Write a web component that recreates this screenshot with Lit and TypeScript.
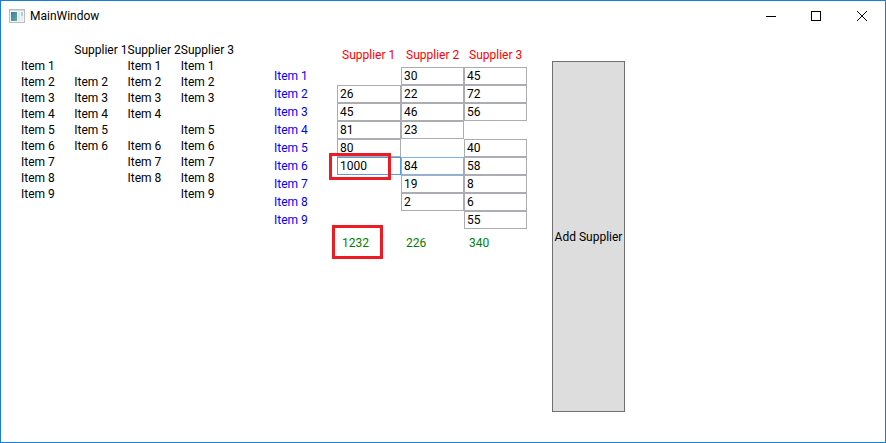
import { LitElement, html, css, svg, nothing } from "lit";
import { customElement } from "lit/decorators.js";
import { classMap } from "lit/directives/class-map.js";

interface Supplier {
  name: string;
  amounts: (number | null)[];
}

const ITEMS = Array.from({ length: 9 }, (_, i) => `Item ${i + 1}`);

const SUPPLIERS: Supplier[] = [
  { name: "Supplier 1", amounts: [null, 26, 45, 81, 80, 1000, null, null, null] },
  { name: "Supplier 2", amounts: [30, 22, 46, 23, null, 84, 19, 2, null] },
  { name: "Supplier 3", amounts: [45, 72, 56, null, 40, 58, 8, 6, 55] },
];

const total = (s: Supplier) => s.amounts.reduce<number>((sum, n) => sum + (n ?? 0), 0);

@customElement("window-bar")
export class WindowBar extends LitElement {
  static styles = css`
    :host {
      display: flex;
      align-items: center;
      height: 29px;
      padding-left: 8px;
    }
    .title {
      flex: 1;
      margin: 0 0 0 5px;
      font-size: 12px;
      line-height: 16px;
      font-weight: 400;
    }
    .app-icon {
      display: block;
    }
    .control {
      width: 46px;
      height: 29px;
      padding: 0;
      border: 0;
      background: none;
      display: flex;
      align-items: center;
      justify-content: center;
    }
  `;

  private control(label: string, shape: unknown) {
    return html`<button class="control" aria-label=${label}>
      <svg width="12" height="12" viewBox="0 0 12 12" fill="none" stroke="#000">${shape}</svg>
    </button>`;
  }

  render() {
    return html`
      <svg class="app-icon" width="16" height="14" viewBox="0 0 16 14">
        <defs>
          <linearGradient id="pane" x1="0" y1="0" x2="1" y2="1">
            <stop offset="0" stop-color="#3f78a8" />
            <stop offset="1" stop-color="#5fb08a" />
          </linearGradient>
        </defs>
        <rect x="0.5" y="0.5" width="15" height="13" fill="#f4f5f6" stroke="#b9bdc3" />
        <rect x="1" y="1" width="14" height="1" fill="#d5d8dc" />
        <rect x="2" y="3" width="6" height="9" fill="url(#pane)" />
        <rect x="9" y="3" width="2" height="9" fill="#e4e7ee" />
        <rect x="12" y="3" width="2" height="4" fill="#a9d3c4" />
        <rect x="12" y="7" width="2" height="5" fill="#e6ebf2" />
      </svg>
      <h1 class="title">MainWindow</h1>
      ${this.control("Minimize", svg`<path d="M2 6.5H12" />`)}
      ${this.control("Maximize", svg`<rect x="1.5" y="1.5" width="9" height="9" />`)}
      ${this.control("Close", svg`<path d="M1 1L11 11M11 1L1 11" />`)}
    `;
  }
}

@customElement("app-root")
export class AppRoot extends LitElement {
  static styles = css`
    :host {
      display: flex;
      flex-direction: column;
      box-sizing: border-box;
      min-height: 100vh;
      border: 1px solid #1a7fd4;
      background: #fff;
      color: #000;
      font-family: Roboto, "Open Sans", sans-serif;
      font-size: 12px;
      line-height: 16px;
    }
    .content {
      flex: 1;
      display: flex;
      padding: 12px 20px 30px;
    }
    table {
      border-collapse: collapse;
      table-layout: fixed;
      align-self: flex-start;
    }
    th,
    td {
      padding: 0;
      font-weight: 400;
      text-align: left;
      white-space: nowrap;
    }
    .overview {
      width: 213px;
    }
    .overview tr {
      height: 16px;
    }
    .amounts {
      width: 253px;
      margin: 1px 25px 0 40px;
    }
    .amounts tr {
      height: 18px;
    }
    .amounts .head {
      height: 24px;
      color: #f00;
    }
    .amounts .sums {
      height: 28px;
      color: #008000;
    }
    .head th,
    .sums td {
      padding-left: 5px;
    }
    .labels {
      width: 63px;
    }
    .first {
      width: 64px;
    }
    .item {
      color: #00f;
    }
    .cell {
      position: relative;
    }
    .amount {
      display: block;
      box-sizing: border-box;
      width: 100%;
      height: 18px;
      margin: 0;
      padding: 0 2px;
      border: 1px solid #abadb3;
      border-radius: 0;
      background: #fff;
      color: inherit;
      font: inherit;
      outline: 0;
    }
    .focused {
      border-color: #569de5;
    }
    .hovered {
      border-color: #7eb4ea;
    }
    .mark {
      position: absolute;
      box-sizing: border-box;
      border: 3px solid #ed1c24;
      pointer-events: none;
    }
    .mark-amount {
      left: -8px;
      top: -4px;
      width: 62px;
      height: 27px;
    }
    .mark-sum {
      left: -5px;
      top: -4px;
      width: 51px;
      height: 34px;
    }
    .add {
      width: 73px;
      margin-top: 19px;
      padding: 0;
      border: 1px solid #707070;
      border-radius: 0;
      background: #ddd;
      color: inherit;
      font: inherit;
      white-space: nowrap;
    }
  `;

  private amountCell(s: Supplier, col: number, row: number) {
    const amount = s.amounts[row];
    if (amount === null) return html`<td></td>`;
    const focused = row === 5 && col === 0;
    const hovered = row === 5 && col === 1;
    return html`<td class="cell">
      <input
        class=${classMap({ amount: true, focused, hovered })}
        aria-label="${s.name}, ${ITEMS[row]}"
        .value=${String(amount)}
      />
      ${focused ? html`<span class="mark mark-amount"></span>` : nothing}
    </td>`;
  }

  render() {
    return html`
      <window-bar></window-bar>
      <main class="content">
        <table class="overview">
          <tr>
            <td></td>
            ${SUPPLIERS.map((s) => html`<th scope="col">${s.name}</th>`)}
          </tr>
          ${ITEMS.map(
            (item, row) => html`<tr>
              <th scope="row">${item}</th>
              ${SUPPLIERS.map((s) => html`<td>${s.amounts[row] === null ? nothing : item}</td>`)}
            </tr>`
          )}
        </table>
        <table class="amounts">
          <colgroup>
            <col class="labels" />
            <col class="first" />
            <col />
            <col />
          </colgroup>
          <tr class="head">
            <td></td>
            ${SUPPLIERS.map((s) => html`<th scope="col">${s.name}</th>`)}
          </tr>
          ${ITEMS.map(
            (item, row) => html`<tr>
              <th class="item" scope="row">${item}</th>
              ${SUPPLIERS.map((s, col) => this.amountCell(s, col, row))}
            </tr>`
          )}
          <tr class="sums">
            <td></td>
            ${SUPPLIERS.map(
              (s, col) => html`<td class="cell">
                ${total(s)}${col === 0 ? html`<span class="mark mark-sum"></span>` : nothing}
              </td>`
            )}
          </tr>
        </table>
        <button class="add">Add Supplier</button>
      </main>
    `;
  }
}
